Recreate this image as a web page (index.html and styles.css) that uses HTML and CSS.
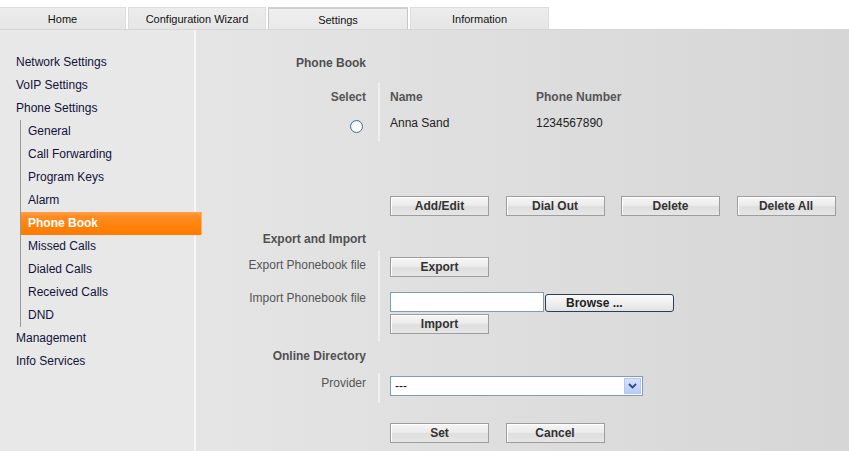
FILE: index.html
```html
<!DOCTYPE html>
<html>
<head>
<meta charset="utf-8">
<title>Phone Book</title>
<link rel="stylesheet" href="styles.css">
</head>
<body>
<div class="tabs">
  <div class="tab t-home">Home</div>
  <div class="tab t-wiz">Configuration Wizard</div>
  <div class="tab t-set active">Settings</div>
  <div class="tab t-info">Information</div>
</div>
<div class="main">
  <nav class="side">
    <div class="item">Network Settings</div>
    <div class="item">VoIP Settings</div>
    <div class="item">Phone Settings</div>
    <div class="sub">
      <div class="item">General</div>
      <div class="item">Call Forwarding</div>
      <div class="item">Program Keys</div>
      <div class="item">Alarm</div>
      <div class="item active">Phone Book</div>
      <div class="item">Missed Calls</div>
      <div class="item">Dialed Calls</div>
      <div class="item">Received Calls</div>
      <div class="item">DND</div>
    </div>
    <div class="item">Management</div>
    <div class="item">Info Services</div>
  </nav>
  <section class="content">
    <div class="row title"><div class="lbl">Phone Book</div></div>

    <div class="row table-row">
      <div class="lbl">
        <div class="cell head">Select</div>
        <div class="cell"><input type="radio" class="radio" name="sel"></div>
      </div>
      <div class="val line">
        <div class="tbl">
          <div class="cell head">Name</div>
          <div class="cell head">Phone Number</div>
          <div class="cell data">Anna Sand</div>
          <div class="cell data">1234567890</div>
        </div>
      </div>
    </div>

    <div class="row btn-row1">
      <div class="lbl"></div>
      <div class="val">
        <div class="btns">
          <button class="btn">Add/Edit</button>
          <button class="btn">Dial Out</button>
          <button class="btn">Delete</button>
          <button class="btn">Delete All</button>
        </div>
      </div>
    </div>

    <div class="row title t2"><div class="lbl">Export and Import</div></div>

    <div class="row exp-row">
      <div class="lbl plain">Export Phonebook file</div>
      <div class="val line"><button class="btn">Export</button></div>
    </div>
    <div class="row imp-row">
      <div class="lbl plain">Import Phonebook file</div>
      <div class="val line">
        <div class="file">
          <input type="text" class="file-input">
          <button class="browse">Browse ...</button>
        </div>
        <button class="btn imp-btn">Import</button>
      </div>
    </div>

    <div class="row title t3"><div class="lbl">Online Directory</div></div>

    <div class="row prov-row">
      <div class="lbl plain">Provider</div>
      <div class="val line">
        <div class="select">
          <span class="sel-text">---</span>
          <span class="sel-arrow"><svg width="9" height="6" viewBox="0 0 9 6"><path d="M1 1 L4.5 4.5 L8 1" fill="none" stroke="#2b4a8a" stroke-width="1.8"/></svg></span>
        </div>
      </div>
    </div>

    <div class="row btn-row2">
      <div class="lbl"></div>
      <div class="val">
        <div class="btns">
          <button class="btn">Set</button>
          <button class="btn">Cancel</button>
        </div>
      </div>
    </div>
  </section>
</div>
</body>
</html>
```
FILE: styles.css
```css
* { box-sizing: border-box; }
html, body { margin: 0; padding: 0; }
body {
  background: #ffffff;
  font-family: "Liberation Sans", Arial, sans-serif;
  font-size: 12px;
  color: #222;
  width: 849px;
  height: 451px;
  overflow: hidden;
}
.tabs {
  display: flex;
  height: 29px;
  padding-top: 7px;
  background: #fff;
}
.tab {
  height: 22px;
  line-height: 23px;
  text-align: center;
  font-size: 11px;
  color: #111;
  background: linear-gradient(#ececec, #e6e6e6);
  border: 1px solid #dcdcdc;
  border-bottom: none;
  margin-right: 2px;
}
.t-home { width: 126px; border-left: none; }
.t-wiz { width: 138px; }
.t-set { width: 140px; }
.t-info { width: 139px; }
.tab.active {
  background: linear-gradient(#efefef, #e9e9e9);
  border-color: #c6c6c6;
  border-top: 2px solid #cfcfcf;
  line-height: 22px;
}
.main {
  display: flex;
  height: 422px;
  border-top: 1px solid #d6d6d6;
}
.side {
  width: 196px;
  flex-shrink: 0;
  background: #e8e8e8;
  border-right: 2px solid #f7f7f7;
  padding-top: 21px;
  color: #12123a;
  position: relative;
  z-index: 1;
}
.side .item {
  height: 23px;
  line-height: 23px;
  padding-left: 16px;
  white-space: nowrap;
}
.sub {
  margin-left: 20px;
  border-left: 1px solid #9a9a9a;
}
.sub .item {
  padding-left: 7px;
  width: 181px;
}
.sub .item.active {
  background: linear-gradient(#ffa04a 0%, #ff8c22 20%, #ff820c 60%, #ff7a00 100%);
  color: #fff;
  font-weight: bold;
  box-shadow: inset -1px 0 0 #ffb064;
}
.content {
  flex: 1;
  background: linear-gradient(to right, #e5e5e5, #d6d6d6);
  padding-top: 23px;
}
.row { display: flex; }
.lbl {
  width: 170px;
  flex-shrink: 0;
  text-align: right;
  color: #555;
}
.title .lbl {
  font-weight: bold;
  height: 20px;
  line-height: 20px;
  color: #505050;
}
.val {
  margin-left: 12px;
  border-left: 2px solid transparent;
  padding-left: 10px;
}
.val.line { border-left-color: #f0f0f0; }

.table-row { margin-top: 10px; }
.table-row .lbl, .table-row .val { padding-bottom: 4px; }
.cell { height: 27px; line-height: 28px; }
.cell.data { line-height: 26px; }
.cell.head { font-weight: bold; color: #555; }
.cell.data { color: #222; }
.tbl { display: grid; grid-template-columns: 146px auto; }
.radio {
  -webkit-appearance: none;
  appearance: none;
  width: 13px;
  height: 13px;
  margin: 0 3px 0 0;
  border: 1px solid #3f6d9c;
  border-radius: 50%;
  background: radial-gradient(circle at 60% 60%, #ffffff 30%, #e2e6ee 100%);
  vertical-align: -5px;
}

.btns { display: flex; gap: 16.5px; }
.btn {
  width: 99px;
  height: 20px;
  padding: 0;
  font-family: "Liberation Sans", Arial, sans-serif;
  font-size: 12px;
  font-weight: bold;
  color: #333;
  border: 1px solid #9d9d9d;
  box-shadow: inset 1px 1px 0 #ffffff;
  background: linear-gradient(#f6f6f6, #ececec 45%, #dedede 55%, #e6e6e6);
  display: block;
}
.btn-row1 { margin-top: 55px; }
.t2 { margin-top: 13px; }

.exp-row { margin-top: 2px; }
.exp-row .lbl { padding-top: 4px; line-height: 20px; }
.exp-row .val { padding-top: 6px; padding-bottom: 9px; }
.imp-row .lbl { padding-top: 2px; line-height: 20px; }
.imp-row .val { padding-top: 6px; padding-bottom: 7px; }
.file { display: flex; align-items: center; height: 20px; }
.file-input {
  width: 154px;
  height: 20px;
  border: 1px solid #7f9db9;
  background: #fff;
  margin: 0;
  padding: 0;
}
.browse {
  margin-left: 1px;
  width: 129px;
  height: 18px;
  margin-top: 1px;
  padding: 0 0 0 20px;
  text-align: left;
  font-family: "Liberation Sans", Arial, sans-serif;
  font-size: 12px;
  font-weight: bold;
  color: #222;
  border: 1px solid #2a3f55;
  border-radius: 3px;
  background: linear-gradient(#fafafa, #efefef 50%, #e2e2e2);
}
.imp-btn { margin-top: 2px; }

.t3 { margin-top: 5px; }
.prov-row { margin-top: 7px; }
.prov-row .lbl { line-height: 21px; }
.prov-row .val { padding-top: 3px; padding-bottom: 7px; }
.select {
  width: 253px;
  height: 20px;
  border: 1px solid #7f9db9;
  background: #fff;
  display: flex;
  align-items: center;
  justify-content: space-between;
  padding: 0 1px 0 4px;
}
.sel-text { color: #111; font-size: 12px; }
.sel-arrow {
  width: 17px;
  height: 16px;
  background: linear-gradient(#d6e2fd, #b9cdf8);
  border: 1px solid #b5c8f0;
  display: flex;
  align-items: center;
  justify-content: center;
}
.btn-row2 { margin-top: 20px; }
```
